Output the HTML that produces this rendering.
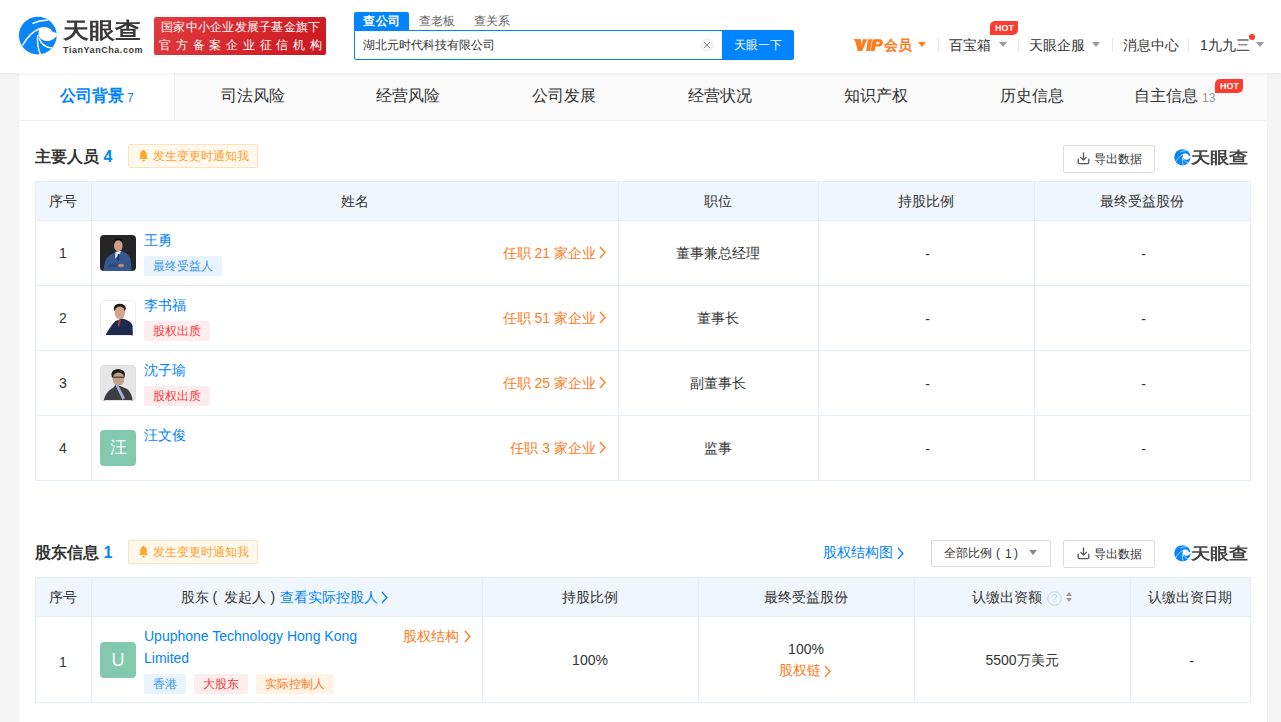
<!DOCTYPE html>
<html><head><meta charset="utf-8">
<style>
*{box-sizing:border-box;margin:0;padding:0}
html,body{width:1281px;height:722px;overflow:hidden;background:#f5f5f5;font-family:"Liberation Sans",sans-serif;color:#333}
.abs{position:absolute}
#hdr{position:absolute;left:0;top:0;width:1281px;height:73px;background:#fff;box-shadow:0 1px 4px rgba(0,0,0,.06);z-index:5}
#wrap{position:absolute;left:19px;top:73px;width:1248px;height:700px;background:#fff;box-shadow:0 0 2px rgba(0,0,0,.05)}
.t{position:absolute;white-space:nowrap;line-height:1}
.av{width:36px;height:36px;border-radius:4px;overflow:hidden}
.av0{background:radial-gradient(circle at 50% 30%,#e8b99a 0 5px,transparent 5.5px),linear-gradient(180deg,#2a2a2e 0,#2a2a2e 55%,#2f5a94 56%,#2f5a94 100%)}
.av1{background:radial-gradient(circle at 55% 35%,#e0a98a 0 5px,transparent 5.5px),linear-gradient(180deg,#fff 0,#fff 55%,#1e2a4a 56%,#1e2a4a 100%);border:1px solid #eee}
.av2{background:radial-gradient(circle at 48% 38%,#c9a58a 0 5px,transparent 5.5px),linear-gradient(180deg,#e4e4e4 0,#e4e4e4 60%,#3a3c40 61%,#3a3c40 100%);border:1px solid #eee}
</style></head><body>
<div id="hdr">
<svg class="abs" style="left:16px;top:14px" width="44" height="44" viewBox="0 0 44 44"><circle cx="21.8" cy="21.6" r="18.9" fill="#0a85f5"/>
<path d="M23.5 14 C28 12 34 13 36.6 17.7 L42 19.5 C40 25 33 28.5 28 26.5 C25 25.5 22.5 23 22.5 20 C22.5 17.5 23 15.5 23.5 14Z" fill="#fff"/>
<path d="M6.5 31.5 C10 25 16 17.5 24 14.5" fill="none" stroke="#fff" stroke-width="1.4"/>
<path d="M16.5 9.5 C21 7.5 27 6 32 6.3" fill="none" stroke="#fff" stroke-width="1.4"/>
<path d="M21.8 21 C21 28 22 35 24.5 40.8" fill="none" stroke="#fff" stroke-width="1.4"/>
<path d="M23 24 C25 30 30 33.5 36 34" fill="none" stroke="#fff" stroke-width="1.4"/></svg>
<div class="t" style="left:63px;top:20px;font-size:22px;font-weight:600;color:#3b3839;transform:scaleX(1.18);transform-origin:0 0">天眼查</div>
<div class="t" style="left:63px;top:46px;font-size:9px;font-weight:bold;color:#3b3839;letter-spacing:0.55px">TianYanCha.com</div>
<div class="abs" style="left:154px;top:17px;width:172px;height:38px;background:linear-gradient(135deg,#e23b40,#c9171f);border-radius:2px"></div>
<div class="t" style="left:161px;top:20.5px;font-size:12px;color:#fff;letter-spacing:0.25px;font-weight:500">国家中小企业发展子基金旗下</div>
<div class="t" style="left:159px;top:39px;font-size:12px;color:#fff;letter-spacing:4.75px;font-weight:500">官方备案企业征信机构</div>
<div class="abs" style="left:354px;top:12px;width:55px;height:18px;background:#0084ff;border-radius:2px 2px 0 0"></div>
<div class="t" style="left:363px;top:15px;font-size:12px;color:#fff;font-weight:bold;letter-spacing:0.6px">查公司</div>
<div class="t" style="left:419px;top:15px;font-size:12px;color:#666">查老板</div>
<div class="t" style="left:474px;top:15px;font-size:12px;color:#666">查关系</div>
<div class="abs" style="left:354px;top:30px;width:370px;height:30px;border:1px solid #0084ff;border-radius:0 0 0 2px;background:#fff"></div>
<div class="t" style="left:363px;top:39px;font-size:12px;color:#333">湖北元时代科技有限公司</div>
<div class="abs" style="left:700px;top:38px;width:14px;height:14px;border-radius:50%;background:#f3f3f3"></div>
<svg class="abs" style="left:703px;top:41px" width="8" height="8" viewBox="0 0 8 8"><path d="M1 1L7 7M7 1L1 7" stroke="#888" stroke-width="1"/></svg>
<div class="abs" style="left:722px;top:30px;width:72px;height:30px;background:#0084ff;border-radius:0 2px 2px 0"></div>
<div class="t" style="left:734px;top:39px;font-size:12px;color:#fff">天眼一下</div>
<svg class="abs" style="left:848px;top:32px" width="40" height="24" viewBox="0 0 40 24"><path fill="#ff7b1c" fill-rule="evenodd" d="M4.9 6.9 L13.1 7.2 L13.4 13.6 L14.9 7.2 L19.2 7.2 L14.1 19 L9.8 19 L7.6 10.2 C7.1 8.6 6.2 7.6 4.9 6.9Z M19.9 7.2 L24.1 7.2 L22 19 L18.2 19Z M24.8 7.2 L31 7.2 C34.3 7.2 35.2 9 34.8 11.2 C34.3 13.6 32.6 14.6 30 14.6 L27.5 14.6 L26.7 19 L22.6 19Z M28.6 9.9 L28.1 12.2 L29.9 12.2 C31 12.2 31.5 11.7 31.6 11 C31.7 10.3 31.3 9.9 30.4 9.9Z"/></svg>
<div class="t" style="left:884px;top:38px;font-size:14px;font-weight:bold;color:#ff7b1c">会员</div>
<div class="abs" style="left:918px;top:42px;width:0;height:0;border-left:4.0px solid transparent;border-right:4.0px solid transparent;border-top:5px solid #ff7b1c"></div>
<div class="abs" style="left:938px;top:38px;width:1px;height:14px;background:#e8e8e8"></div>
<div class="t" style="left:949px;top:38px;font-size:14px;color:#333">百宝箱</div>
<div class="abs" style="left:999px;top:42px;width:0;height:0;border-left:4.0px solid transparent;border-right:4.0px solid transparent;border-top:5px solid #999"></div>
<div class="abs" style="left:990px;top:21px;width:28px;height:14px;background:#ff3b30;border-radius:5px 1px 5px 0"></div>
<div class="t" style="left:995px;top:23.5px;font-size:9px;font-weight:bold;color:#fff">HOT</div>
<div class="abs" style="left:1018px;top:38px;width:1px;height:14px;background:#e8e8e8"></div>
<div class="t" style="left:1029px;top:38px;font-size:14px;color:#333">天眼企服</div>
<div class="abs" style="left:1092px;top:42px;width:0;height:0;border-left:4.0px solid transparent;border-right:4.0px solid transparent;border-top:5px solid #999"></div>
<div class="abs" style="left:1112px;top:38px;width:1px;height:14px;background:#e8e8e8"></div>
<div class="t" style="left:1123px;top:38px;font-size:14px;color:#333">消息中心</div>
<div class="abs" style="left:1188px;top:38px;width:1px;height:14px;background:#e8e8e8"></div>
<div class="t" style="left:1200px;top:38px;font-size:14px;color:#333">1九九三</div>
<div class="abs" style="left:1249px;top:34px;width:6px;height:6px;border-radius:50%;background:#ff3b30"></div>
<div class="abs" style="left:1256px;top:42px;width:0;height:0;border-left:4.0px solid transparent;border-right:4.0px solid transparent;border-top:5px solid #999"></div>
</div>
<div id="wrap"></div>
<div class="abs" style="left:19px;top:73px;width:1248px;height:48px;background:#fafafa;border-bottom:1px solid #efefef"></div>
<div class="abs" style="left:19px;top:73px;width:156px;height:47px;background:#fff;border-right:1px solid #efefef"></div>
<div class="t" style="left:60px;top:88px;font-size:16px;font-weight:bold;color:#0084ff">公司背景</div>
<div class="t" style="left:127px;top:92px;font-size:12px;color:#0084ff">7</div>
<div class="t" style="left:221px;top:88px;font-size:16px;color:#333">司法风险</div>
<div class="t" style="left:376px;top:88px;font-size:16px;color:#333">经营风险</div>
<div class="t" style="left:532px;top:88px;font-size:16px;color:#333">公司发展</div>
<div class="t" style="left:688px;top:88px;font-size:16px;color:#333">经营状况</div>
<div class="t" style="left:844px;top:88px;font-size:16px;color:#333">知识产权</div>
<div class="t" style="left:1000px;top:88px;font-size:16px;color:#333">历史信息</div>
<div class="t" style="left:1134px;top:88px;font-size:16px;color:#333">自主信息</div>
<div class="t" style="left:1202px;top:92px;font-size:12px;color:#999">13</div>
<div class="abs" style="left:1215px;top:79px;width:28px;height:14px;background:#ff3b30;border-radius:5px 1px 5px 0"></div>
<div class="t" style="left:1220px;top:81.5px;font-size:9px;font-weight:bold;color:#fff">HOT</div>
<div class="t" style="left:35px;top:149px;font-size:16px;font-weight:bold;color:#333">主要人员</div>
<div class="t" style="left:103.5px;top:149px;font-size:16px;font-weight:bold;color:#0084ff">4</div>
<div class="abs" style="left:128px;top:144px;width:130px;height:24px;background:#fff8ec;border:1px solid #ffe2b8;border-radius:2px"></div>
<svg class="abs" style="left:137.5px;top:149.8px" width="11" height="12" viewBox="0 0 11 12"><path d="M5.5 0.1 C3.1 0.8 2.2 2.7 2.2 4.6 L2.2 8 L0.2 9 L10.8 9 L8.8 8 L8.8 4.6 C8.8 2.7 7.9 0.8 5.5 0.1Z" fill="#ffa726"/><path d="M4 10 A1.5 1.5 0 0 0 7 10Z" fill="#ffa726"/></svg>
<div class="t" style="left:153px;top:150px;font-size:12px;color:#ffa02d">发生变更时通知我</div>
<div class="abs" style="left:1063px;top:145px;width:92px;height:28px;background:#fff;border:1px solid #dcdcdc;border-radius:2px"></div>
<svg class="abs" style="left:1076.5px;top:152px" width="13" height="13" viewBox="0 0 13 13"><path d="M6.5 0.8 L6.5 8 M3.8 5.4 L6.5 8.1 L9.2 5.4" fill="none" stroke="#555" stroke-width="1.3" stroke-linecap="round" stroke-linejoin="round"/><path d="M1.2 7.2 L1.2 10.3 Q1.2 11.6 2.5 11.6 L10.5 11.6 Q11.8 11.6 11.8 10.3 L11.8 7.2" fill="none" stroke="#555" stroke-width="1.3" stroke-linecap="round"/></svg>
<div class="t" style="left:1094px;top:152.5px;font-size:12px;color:#333">导出数据</div>
<svg class="abs" style="left:1173px;top:148px" width="19" height="19" viewBox="0 0 44 44"><circle cx="21.8" cy="21.6" r="18.9" fill="#0a85f5"/>
<path d="M23.5 14 C28 12 34 13 36.6 17.7 L42 19.5 C40 25 33 28.5 28 26.5 C25 25.5 22.5 23 22.5 20 C22.5 17.5 23 15.5 23.5 14Z" fill="#fff"/>
<path d="M6.5 31.5 C10 25 16 17.5 24 14.5" fill="none" stroke="#fff" stroke-width="1.4"/>
<path d="M16.5 9.5 C21 7.5 27 6 32 6.3" fill="none" stroke="#fff" stroke-width="1.4"/>
<path d="M21.8 21 C21 28 22 35 24.5 40.8" fill="none" stroke="#fff" stroke-width="1.4"/>
<path d="M23 24 C25 30 30 33.5 36 34" fill="none" stroke="#fff" stroke-width="1.4"/></svg>
<div class="t" style="left:1191px;top:150px;font-size:16px;font-weight:bold;color:#444;transform:scaleX(1.2);transform-origin:0 0">天眼查</div>
<div class="abs" style="left:35px;top:181px;width:1216px;height:40px;background:#eff6fd"></div>
<div class="abs" style="left:35px;top:181px;width:1216px;height:1px;background:#e4eef6"></div>
<div class="abs" style="left:35px;top:220px;width:1216px;height:1px;background:#e4eef6"></div>
<div class="abs" style="left:35px;top:285px;width:1216px;height:1px;background:#e4eef6"></div>
<div class="abs" style="left:35px;top:350px;width:1216px;height:1px;background:#e4eef6"></div>
<div class="abs" style="left:35px;top:415px;width:1216px;height:1px;background:#e4eef6"></div>
<div class="abs" style="left:35px;top:480px;width:1216px;height:1px;background:#e4eef6"></div>
<div class="abs" style="left:35px;top:181px;width:1px;height:300px;background:#e4eef6"></div>
<div class="abs" style="left:91px;top:181px;width:1px;height:300px;background:#e4eef6"></div>
<div class="abs" style="left:618px;top:181px;width:1px;height:300px;background:#e4eef6"></div>
<div class="abs" style="left:818px;top:181px;width:1px;height:300px;background:#e4eef6"></div>
<div class="abs" style="left:1034px;top:181px;width:1px;height:300px;background:#e4eef6"></div>
<div class="abs" style="left:1250px;top:181px;width:1px;height:300px;background:#e4eef6"></div>
<div class="t" style="left:35px;width:56px;text-align:center;top:194px;font-size:14px;color:#333">序号</div>
<div class="t" style="left:91px;width:527px;text-align:center;top:194px;font-size:14px;color:#333">姓名</div>
<div class="t" style="left:618px;width:200px;text-align:center;top:194px;font-size:14px;color:#333">职位</div>
<div class="t" style="left:818px;width:216px;text-align:center;top:194px;font-size:14px;color:#333">持股比例</div>
<div class="t" style="left:1034px;width:216px;text-align:center;top:194px;font-size:14px;color:#333">最终受益股份</div>
<div class="t" style="left:35px;width:56px;text-align:center;top:246px;font-size:14px;color:#333">1</div>
<svg class="abs" style="left:100px;top:235px" width="36" height="36" viewBox="0 0 36 36"><defs><filter id="bl0" x="-10%" y="-10%" width="120%" height="120%"><feGaussianBlur stdDeviation="0.45"/></filter></defs><clipPath id="c0"><rect x="0" y="0" width="36" height="36" rx="4"/></clipPath><g clip-path="url(#c0)"><rect width="36" height="36" fill="#252528"/><g filter="url(#bl0)"><ellipse cx="18.3" cy="7" rx="4.8" ry="4" fill="#15110e"/><ellipse cx="18.3" cy="10.8" rx="4.3" ry="5.6" fill="#c9a088"/><path d="M3 37 L5 27 C6.5 21.5 10.5 19.5 15.5 17 L17.5 21 L21.5 16 C25.5 17.5 29 19.5 30.5 24 L32 37Z" fill="#35598f"/><path d="M15.5 16.8 L21.5 15.8 L19.5 19.8 L15 23.5Z" fill="#dfe6ee"/><path d="M17.8 19 L19.6 19 L18.8 26 L17.4 25Z" fill="#1b2f60"/><path d="M8 30 C12 28 19 28 25 29.5 L24 32.5 C18 31.5 12 32 8.5 33Z" fill="#2c4c80"/><ellipse cx="21" cy="30.5" rx="3.2" ry="1.8" fill="#b4876f"/></g></g></svg>
<div class="t" style="left:144px;top:233px;font-size:14px;color:#0084ff">王勇</div>
<div class="t" style="left:144px;top:256px;height:20px;padding:0 9px;line-height:20px;background:#e8f3fd;color:#3b95f0;font-size:12px;border-radius:2px">最终受益人</div>
<div class="t" style="right:685px;top:246px;font-size:14px;color:#ff7a1a">任职 21 家企业</div>
<svg class="abs" style="left:599px;top:246px" width="8" height="13" viewBox="0 0 8 13"><path d="M1 1 L6 6.5 L1 12" fill="none" stroke="#ff7a1a" stroke-width="1.3"/></svg>
<div class="t" style="left:618px;width:200px;text-align:center;top:246px;font-size:14px;color:#333">董事兼总经理</div>
<div class="t" style="left:819.5px;width:216.0px;text-align:center;top:247px;font-size:14px;color:#333;letter-spacing:0">-</div>
<div class="t" style="left:1035.5px;width:216.0px;text-align:center;top:247px;font-size:14px;color:#333">-</div>
<div class="t" style="left:35px;width:56px;text-align:center;top:311px;font-size:14px;color:#333">2</div>
<svg class="abs" style="left:100px;top:300px" width="36" height="36" viewBox="0 0 36 36"><defs><filter id="bl1" x="-10%" y="-10%" width="120%" height="120%"><feGaussianBlur stdDeviation="0.45"/></filter></defs><clipPath id="c1"><rect x="0" y="0" width="36" height="36" rx="4"/></clipPath><g clip-path="url(#c1)"><rect width="36" height="36" fill="#fff"/><g filter="url(#bl1)"><ellipse cx="19.8" cy="8.5" rx="6" ry="4.8" fill="#1e1e1e"/><ellipse cx="19.8" cy="12.8" rx="5.2" ry="6.3" fill="#d6a68a"/><path d="M4.5 37 C7.5 31 11.5 25 15.5 21 L22 18.5 C26.5 19.5 31 21.5 32.5 25.5 L33 37Z" fill="#1f2b4d"/><path d="M18.5 20 L21 20 L19 27 L17.5 25.5Z" fill="#b03a3a"/></g><rect x="0.5" y="0.5" width="35" height="35" rx="4" fill="none" stroke="#ececec"/></g></svg>
<div class="t" style="left:144px;top:298px;font-size:14px;color:#0084ff">李书福</div>
<div class="t" style="left:144px;top:321px;height:20px;padding:0 9px;line-height:20px;background:#ffeded;color:#f5393a;font-size:12px;border-radius:2px">股权出质</div>
<div class="t" style="right:685px;top:311px;font-size:14px;color:#ff7a1a">任职 51 家企业</div>
<svg class="abs" style="left:599px;top:311px" width="8" height="13" viewBox="0 0 8 13"><path d="M1 1 L6 6.5 L1 12" fill="none" stroke="#ff7a1a" stroke-width="1.3"/></svg>
<div class="t" style="left:618px;width:200px;text-align:center;top:311px;font-size:14px;color:#333">董事长</div>
<div class="t" style="left:819.5px;width:216.0px;text-align:center;top:312px;font-size:14px;color:#333;letter-spacing:0">-</div>
<div class="t" style="left:1035.5px;width:216.0px;text-align:center;top:312px;font-size:14px;color:#333">-</div>
<div class="t" style="left:35px;width:56px;text-align:center;top:376px;font-size:14px;color:#333">3</div>
<svg class="abs" style="left:100px;top:365px" width="36" height="36" viewBox="0 0 36 36"><defs><filter id="bl2" x="-10%" y="-10%" width="120%" height="120%"><feGaussianBlur stdDeviation="0.45"/></filter></defs><clipPath id="c2"><rect x="0" y="0" width="36" height="36" rx="4"/></clipPath><g clip-path="url(#c2)"><rect width="36" height="36" fill="#e6e6e6"/><g filter="url(#bl2)"><ellipse cx="18.2" cy="9.5" rx="6.8" ry="5.5" fill="#1c1c1c"/><ellipse cx="18.5" cy="14" rx="5.9" ry="6.6" fill="#c2a08a"/><rect x="12.8" y="11.5" width="11.5" height="1.5" fill="#5a4a44"/><path d="M3.5 37 C4.5 30 8 25.5 13.5 22.5 L15.5 19.5 C19.5 21 23.5 22 27 24 C30 26 32 30 33 37Z" fill="#3a3c41"/><path d="M15 19.5 L18.5 20.5 L25 33 L22.5 35Z" fill="#a2b1c9"/></g><rect x="0.5" y="0.5" width="35" height="35" rx="4" fill="none" stroke="#e0e0e0"/></g></svg>
<div class="t" style="left:144px;top:363px;font-size:14px;color:#0084ff">沈子瑜</div>
<div class="t" style="left:144px;top:386px;height:20px;padding:0 9px;line-height:20px;background:#ffeded;color:#f5393a;font-size:12px;border-radius:2px">股权出质</div>
<div class="t" style="right:685px;top:376px;font-size:14px;color:#ff7a1a">任职 25 家企业</div>
<svg class="abs" style="left:599px;top:376px" width="8" height="13" viewBox="0 0 8 13"><path d="M1 1 L6 6.5 L1 12" fill="none" stroke="#ff7a1a" stroke-width="1.3"/></svg>
<div class="t" style="left:618px;width:200px;text-align:center;top:376px;font-size:14px;color:#333">副董事长</div>
<div class="t" style="left:819.5px;width:216.0px;text-align:center;top:377px;font-size:14px;color:#333;letter-spacing:0">-</div>
<div class="t" style="left:1035.5px;width:216.0px;text-align:center;top:377px;font-size:14px;color:#333">-</div>
<div class="t" style="left:35px;width:56px;text-align:center;top:441px;font-size:14px;color:#333">4</div>
<div class="abs" style="left:100px;top:430px;width:36px;height:36px;border-radius:4px;background:#82c9ad;color:#fff;font-size:17px;line-height:35px;text-align:center">汪</div>
<div class="t" style="left:144px;top:428px;font-size:14px;color:#0084ff">汪文俊</div>
<div class="t" style="right:685px;top:441px;font-size:14px;color:#ff7a1a">任职 3 家企业</div>
<svg class="abs" style="left:599px;top:441px" width="8" height="13" viewBox="0 0 8 13"><path d="M1 1 L6 6.5 L1 12" fill="none" stroke="#ff7a1a" stroke-width="1.3"/></svg>
<div class="t" style="left:618px;width:200px;text-align:center;top:441px;font-size:14px;color:#333">监事</div>
<div class="t" style="left:819.5px;width:216.0px;text-align:center;top:442px;font-size:14px;color:#333;letter-spacing:0">-</div>
<div class="t" style="left:1035.5px;width:216.0px;text-align:center;top:442px;font-size:14px;color:#333">-</div>
<div class="t" style="left:35px;top:545px;font-size:16px;font-weight:bold;color:#333">股东信息</div>
<div class="t" style="left:103.5px;top:545px;font-size:16px;font-weight:bold;color:#0084ff">1</div>
<div class="abs" style="left:128px;top:540px;width:130px;height:24px;background:#fff8ec;border:1px solid #ffe2b8;border-radius:2px"></div>
<svg class="abs" style="left:137.5px;top:545.8px" width="11" height="12" viewBox="0 0 11 12"><path d="M5.5 0.1 C3.1 0.8 2.2 2.7 2.2 4.6 L2.2 8 L0.2 9 L10.8 9 L8.8 8 L8.8 4.6 C8.8 2.7 7.9 0.8 5.5 0.1Z" fill="#ffa726"/><path d="M4 10 A1.5 1.5 0 0 0 7 10Z" fill="#ffa726"/></svg>
<div class="t" style="left:153px;top:546px;font-size:12px;color:#ffa02d">发生变更时通知我</div>
<div class="t" style="left:823px;top:545px;font-size:14px;color:#0084ff">股权结构图</div>
<svg class="abs" style="left:897px;top:547px" width="8" height="13" viewBox="0 0 8 13"><path d="M1 1 L6 6.5 L1 12" fill="none" stroke="#0084ff" stroke-width="1.3"/></svg>
<div class="abs" style="left:931px;top:540px;width:120px;height:27px;background:#fff;border:1px solid #dcdcdc;border-radius:2px"></div>
<div class="t" style="left:944px;top:547px;font-size:12px;color:#333">全部比例</div>
<div class="t" style="left:996px;top:547px;font-size:12px;color:#333">(</div>
<div class="t" style="left:1005px;top:547.5px;font-size:12px;color:#333">1</div>
<div class="t" style="left:1014px;top:547px;font-size:12px;color:#333">)</div>
<div class="abs" style="left:1029px;top:550px;width:0;height:0;border-left:4.0px solid transparent;border-right:4.0px solid transparent;border-top:5px solid #888"></div>
<div class="abs" style="left:1063px;top:540px;width:92px;height:28px;background:#fff;border:1px solid #dcdcdc;border-radius:2px"></div>
<svg class="abs" style="left:1076.5px;top:547px" width="13" height="13" viewBox="0 0 13 13"><path d="M6.5 0.8 L6.5 8 M3.8 5.4 L6.5 8.1 L9.2 5.4" fill="none" stroke="#555" stroke-width="1.3" stroke-linecap="round" stroke-linejoin="round"/><path d="M1.2 7.2 L1.2 10.3 Q1.2 11.6 2.5 11.6 L10.5 11.6 Q11.8 11.6 11.8 10.3 L11.8 7.2" fill="none" stroke="#555" stroke-width="1.3" stroke-linecap="round"/></svg>
<div class="t" style="left:1094px;top:547.5px;font-size:12px;color:#333">导出数据</div>
<svg class="abs" style="left:1173px;top:544px" width="19" height="19" viewBox="0 0 44 44"><circle cx="21.8" cy="21.6" r="18.9" fill="#0a85f5"/>
<path d="M23.5 14 C28 12 34 13 36.6 17.7 L42 19.5 C40 25 33 28.5 28 26.5 C25 25.5 22.5 23 22.5 20 C22.5 17.5 23 15.5 23.5 14Z" fill="#fff"/>
<path d="M6.5 31.5 C10 25 16 17.5 24 14.5" fill="none" stroke="#fff" stroke-width="1.4"/>
<path d="M16.5 9.5 C21 7.5 27 6 32 6.3" fill="none" stroke="#fff" stroke-width="1.4"/>
<path d="M21.8 21 C21 28 22 35 24.5 40.8" fill="none" stroke="#fff" stroke-width="1.4"/>
<path d="M23 24 C25 30 30 33.5 36 34" fill="none" stroke="#fff" stroke-width="1.4"/></svg>
<div class="t" style="left:1191px;top:546px;font-size:16px;font-weight:bold;color:#444;transform:scaleX(1.2);transform-origin:0 0">天眼查</div>
<div class="abs" style="left:35px;top:577px;width:1216px;height:40px;background:#eff6fd"></div>
<div class="abs" style="left:35px;top:577px;width:1216px;height:1px;background:#e4eef6"></div>
<div class="abs" style="left:35px;top:616px;width:1216px;height:1px;background:#e4eef6"></div>
<div class="abs" style="left:35px;top:702px;width:1216px;height:1px;background:#e4eef6"></div>
<div class="abs" style="left:35px;top:577px;width:1px;height:126px;background:#e4eef6"></div>
<div class="abs" style="left:91px;top:577px;width:1px;height:126px;background:#e4eef6"></div>
<div class="abs" style="left:482px;top:577px;width:1px;height:126px;background:#e4eef6"></div>
<div class="abs" style="left:698px;top:577px;width:1px;height:126px;background:#e4eef6"></div>
<div class="abs" style="left:914px;top:577px;width:1px;height:126px;background:#e4eef6"></div>
<div class="abs" style="left:1130px;top:577px;width:1px;height:126px;background:#e4eef6"></div>
<div class="abs" style="left:1250px;top:577px;width:1px;height:126px;background:#e4eef6"></div>
<div class="t" style="left:35px;width:56px;text-align:center;top:590px;font-size:14px;color:#333">序号</div>
<div class="t" style="left:181px;top:590px;font-size:14px;color:#333">股东</div>
<div class="t" style="left:212.5px;top:590px;font-size:14px;color:#333">(</div>
<div class="t" style="left:224px;top:590px;font-size:14px;color:#333">发起人</div>
<div class="t" style="left:270.5px;top:590px;font-size:14px;color:#333">)</div>
<div class="t" style="left:279.5px;top:590px;font-size:14px;color:#0084ff">查看实际控股人</div>
<svg class="abs" style="left:381px;top:591px" width="8" height="13" viewBox="0 0 8 13"><path d="M1 1 L6 6.5 L1 12" fill="none" stroke="#0084ff" stroke-width="1.3"/></svg>
<div class="t" style="left:482px;width:216px;text-align:center;top:590px;font-size:14px;color:#333">持股比例</div>
<div class="t" style="left:698px;width:216px;text-align:center;top:590px;font-size:14px;color:#333">最终受益股份</div>
<div class="t" style="left:972px;top:590px;font-size:14px;color:#333">认缴出资额</div>
<svg class="abs" style="left:1047px;top:590.5px" width="15" height="15" viewBox="0 0 15 15"><circle cx="7.5" cy="7.5" r="6.8" fill="none" stroke="#b9d7f2" stroke-width="1"/><text x="7.5" y="11" text-anchor="middle" font-size="10" fill="#b9d7f2" font-family="Liberation Sans">?</text></svg>
<svg class="abs" style="left:1065px;top:591px" width="8" height="12" viewBox="0 0 8 12"><path d="M4 1 L7 5 L1 5Z M4 11 L7 7 L1 7Z" fill="#999"/></svg>
<div class="t" style="left:1130px;width:120px;text-align:center;top:590px;font-size:14px;color:#333">认缴出资日期</div>
<div class="t" style="left:35px;width:56px;text-align:center;top:655px;font-size:14px;color:#333">1</div>
<div class="abs" style="left:100px;top:642px;width:36px;height:36px;border-radius:4px;background:#82c9ad;color:#fff;font-size:18px;line-height:36px;text-align:center">U</div>
<div class="abs" style="left:144px;top:625px;width:240px;font-size:14px;line-height:22px;color:#0084ff">Upuphone Technology Hong Kong Limited</div>
<div class="t" style="left:403px;top:629px;font-size:14px;color:#ff7a1a">股权结构</div>
<svg class="abs" style="left:464px;top:630px" width="8" height="13" viewBox="0 0 8 13"><path d="M1 1 L6 6.5 L1 12" fill="none" stroke="#ff7a1a" stroke-width="1.3"/></svg>
<div class="t" style="left:144px;top:674px;height:20px;padding:0 9px;line-height:20px;background:#e8f3fd;color:#3b95f0;font-size:12px;border-radius:2px">香港</div>
<div class="t" style="left:194px;top:674px;height:20px;padding:0 9px;line-height:20px;background:#ffeded;color:#f5393a;font-size:12px;border-radius:2px">大股东</div>
<div class="t" style="left:256px;top:674px;height:20px;padding:0 9px;line-height:20px;background:#fff3e6;color:#ff7a1a;font-size:12px;border-radius:2px">实际控制人</div>
<div class="t" style="left:482px;width:216px;text-align:center;top:653px;font-size:14px;color:#333">100%</div>
<div class="t" style="left:698px;width:216px;text-align:center;top:642px;font-size:14px;color:#333">100%</div>
<div class="t" style="left:779px;top:663px;font-size:14px;color:#ff7a1a">股权链</div>
<svg class="abs" style="left:824px;top:665px" width="8" height="13" viewBox="0 0 8 13"><path d="M1 1 L6 6.5 L1 12" fill="none" stroke="#ff7a1a" stroke-width="1.3"/></svg>
<div class="t" style="left:914px;width:216px;text-align:center;top:653px;font-size:14px;color:#333">5500万美元</div>
<div class="t" style="left:1131.5px;width:120.0px;text-align:center;top:654px;font-size:14px;color:#333">-</div>
</body></html>
